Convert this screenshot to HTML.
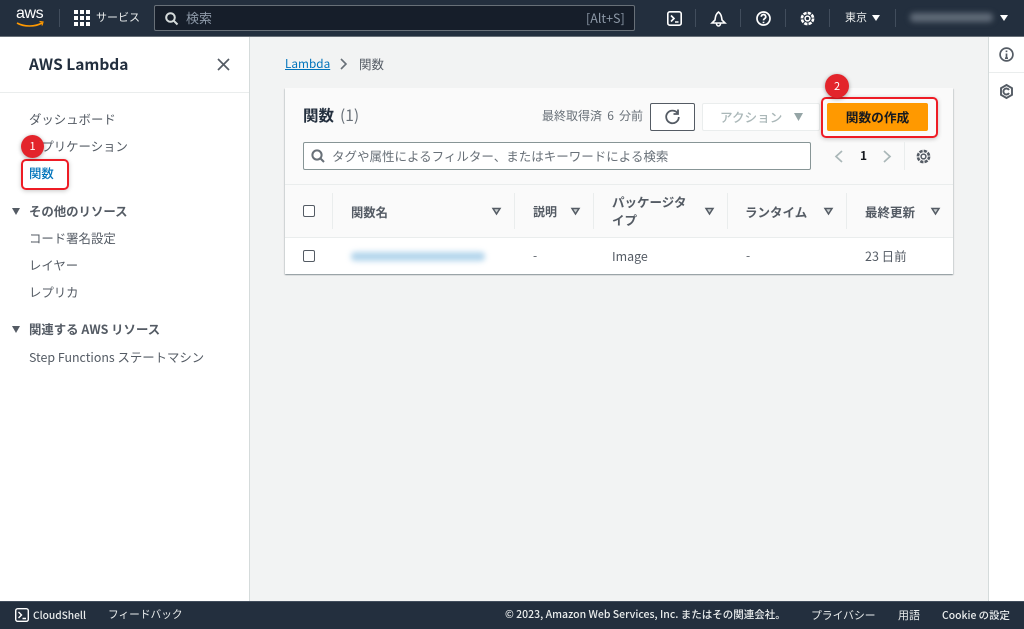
<!DOCTYPE html>
<html lang="ja"><head><meta charset="utf-8"><title>Lambda</title>
<style>
*{box-sizing:border-box}
html,body{margin:0;padding:0}
body{width:1024px;height:629px;position:relative;overflow:hidden;background:#f2f3f3;font-family:"Noto Sans CJK JP","Liberation Sans",sans-serif;font-size:12.400px;color:#545b64}
.a{position:absolute;white-space:nowrap;line-height:18px}
svg{position:absolute;overflow:visible}
.sep{position:absolute;width:1px;background:#eaeded}
.tsep{position:absolute;width:1px;height:18px;top:9px;background:#414d5c}
.b{font-weight:700}
</style></head><body>
<div class="a" style="left:0;top:0;width:1024px;height:37px;background:#232f3e;border-bottom:1px solid #687078"></div>
<svg style="left:16px;top:8px" width="28" height="20" viewBox="0 0 28 20"><path d="M1 15c7 4 18 4 25 0" fill="none" stroke="#f90" stroke-width="1.600"/><path d="M23.500 13.500l3.500.5-1 3.500" fill="none" stroke="#f90" stroke-width="1.200"/></svg>
<div class="a" style="left:16px;top:7px;color:#fff;font:400 16px/14px 'Liberation Sans',sans-serif;letter-spacing:-.4px">aws</div>
<div class="tsep" style="left:59px"></div>
<svg style="left:74px;top:10px" width="16" height="16"><g fill="#fff"><rect width="4" height="4"/><rect x="6" width="4" height="4"/><rect x="12" width="4" height="4"/><rect y="6" width="4" height="4"/><rect x="6" y="6" width="4" height="4"/><rect x="12" y="6" width="4" height="4"/><rect y="12" width="4" height="4"/><rect x="6" y="12" width="4" height="4"/><rect x="12" y="12" width="4" height="4"/></g></svg>
<div class="a" style="left:96px;top:8px;color:#eaeded;font-size:11px">サービス</div>
<div class="a" style="left:154px;top:5px;width:481px;height:26px;background:#161e2a;border:1px solid #687078;border-radius:2px"></div>
<svg style="left:165px;top:12px" width="13" height="13" fill="none" stroke="#d5dbdb" stroke-width="2"><circle cx="5.500" cy="5.500" r="4.300"/><path d="M8.800 8.800L12.500 12.500"/></svg>
<div class="a" style="left:186px;top:9px;color:#8d99a8;font-size:13px">検索</div>
<div class="a" style="left:586px;top:9px;color:#8d99a8;font-size:12.500px">[Alt+S]</div>
<svg style="left:667px;top:11px" width="15" height="15" fill="none" stroke="#fff" stroke-width="1.600"><rect x=".8" y=".8" width="13.400" height="13.400" rx="2"/><path d="M4 4.500l3 3-3 3M8 11h3.500"/></svg>
<div class="tsep" style="left:695px"></div>
<svg style="left:711px;top:11px" width="15" height="16" fill="none" stroke="#fff" stroke-width="1.600"><path d="M7.500 1C5 3 4.500 5 4 9L1 12h13l-3-3C10.500 5 10 3 7.500 1zM5.500 12.500a2 2.500 0 0 0 4 0"/></svg>
<div class="tsep" style="left:740px"></div>
<svg style="left:756px;top:11px" width="15" height="15" fill="none" stroke="#fff" stroke-width="1.700"><circle cx="7.500" cy="7.500" r="6.500"/><path d="M5.300 5.700a2.200 2.200 0 1 1 3.300 1.900c-.8.5-1.100.9-1.100 1.800"/><path d="M7.500 10.700v1.500"/></svg>
<div class="tsep" style="left:785px"></div>
<svg style="left:800px;top:11px" width="15" height="15" fill="none" stroke="#fff"><circle cx="7.500" cy="7.500" r="5.600" stroke-width="2.600" stroke-dasharray="3.300 1.100"/><circle cx="7.500" cy="7.500" r="2.400" stroke-width="1.500"/></svg>
<div class="tsep" style="left:829px"></div>
<div class="a" style="left:845px;top:8px;color:#eaeded;font-size:11px">東京</div>
<svg style="left:872px;top:15px" width="8" height="6"><path d="M0 0h8L4 6z" fill="#fff"/></svg>
<div class="tsep" style="left:895px"></div>
<div class="a" style="left:910px;top:13px;width:83px;height:9px;background:#606b78;border-radius:4px;filter:blur(3px)"></div>
<svg style="left:1000px;top:15px" width="8" height="6"><path d="M0 0h8L4 6z" fill="#fff"/></svg>

<div class="a" style="left:0;top:37px;width:250px;height:564px;background:#fff;border-right:1px solid #d5dbdb"></div>
<div class="a" style="left:0;top:92px;width:249px;height:1px;background:#eaeded"></div>
<div class="a b" style="left:29px;top:54px;color:#232f3e;font-size:15.500px;line-height:20px">AWS Lambda</div>
<svg style="left:217px;top:58px" width="13" height="13" fill="none" stroke="#545b64" stroke-width="1.700"><path d="M1 1l11 11M12 1L1 12"/></svg>
<div class="a" style="left:29px;top:110px">ダッシュボード</div>
<div class="a" style="left:29px;top:137px">アプリケーション</div>
<div class="a" style="left:29px;top:164px;color:#0073bb;font-weight:500">関数</div>
<svg style="left:12px;top:208px" width="8" height="7"><path d="M0 0h8L4 7z" fill="#545b64"/></svg>
<div class="a b" style="left:29px;top:202px">その他のリソース</div>
<div class="a" style="left:29px;top:229px">コード署名設定</div>
<div class="a" style="left:29px;top:256px">レイヤー</div>
<div class="a" style="left:29px;top:283px">レプリカ</div>
<svg style="left:12px;top:326px" width="8" height="7"><path d="M0 0h8L4 7z" fill="#545b64"/></svg>
<div class="a b" style="left:29px;top:320px">関連する AWS リソース</div>
<div class="a" style="left:29px;top:348px">Step Functions ステートマシン</div>
<div class="a" style="left:21px;top:159px;width:48px;height:31px;border:2px solid #ee1c25;border-radius:5px;box-shadow:0 1px 5px rgba(0,0,0,.22)"></div>
<div class="a" style="left:21px;top:135px;width:23px;height:23px;border-radius:50%;background:#e3242b;box-shadow:0 1px 4px rgba(0,0,0,.35);color:#fff;font-size:11px;line-height:23px;text-align:center">1</div>

<div class="a" style="left:285px;top:55px;color:#0073bb;text-decoration:underline;font-size:11.800px">Lambda</div>
<svg style="left:340px;top:58px" width="8" height="12" fill="none" stroke="#687078" stroke-width="1.600"><path d="M1 1l5 5-5 5"/></svg>
<div class="a" style="left:359px;top:55px;font-size:12.500px">関数</div>

<div class="a" style="left:285px;top:88px;width:668px;height:186px;background:#fff;box-shadow:0 1px 1px rgba(0,28,36,.3),1px 1px 1px rgba(0,28,36,.1),-1px 1px 1px rgba(0,28,36,.1)"></div>
<div class="a" style="left:285px;top:88px;width:668px;height:97px;background:#fafafa;border-bottom:1px solid #eaeded"></div>
<div class="a" style="left:285px;top:185px;width:668px;height:53px;background:#fafafa;border-bottom:1px solid #eaeded"></div>
<div class="a b" style="left:303px;top:105px;color:#232f3e;font-size:15.500px;line-height:20px">関数</div>
<div class="a" style="left:340px;top:105px;font-size:15.500px;line-height:20px;color:#687078">(1)</div>
<div class="a" style="left:542px;top:107px;font-size:12px;color:#687078;word-spacing:2.500px">最終取得済 6 分前</div>
<div class="a" style="left:650px;top:103px;width:45px;height:28px;background:#fff;border:1px solid #545b64;border-radius:2px"></div>
<svg style="left:665px;top:109px" width="15" height="15" fill="none" stroke="#545b64" stroke-width="1.800"><path d="M12.800 4.500A6.300 6.300 0 1 0 13.800 8"/><path d="M13 .5v4.500H8.500"/></svg>
<div class="a" style="left:702px;top:103px;width:118px;height:28px;background:#fff;border:1px solid #eaeded;border-radius:2px"></div>
<div class="a" style="left:720px;top:108px;color:#aab7b8;font-weight:500;font-size:12.600px">アクション</div>
<svg style="left:794px;top:113px" width="9" height="8"><path d="M0 0h9L4.500 8z" fill="#95a5a6"/></svg>
<div class="a" style="left:821px;top:97px;width:117px;height:41px;border:2px solid #ee1c25;border-radius:5px;box-shadow:0 1px 5px rgba(0,0,0,.22)"></div>
<div class="a" style="left:827px;top:103px;width:101px;height:28px;background:#f90;border-radius:2px;color:#16191f;font-size:12.700px;font-weight:700;line-height:28px;text-align:center">関数の作成</div>
<div class="a" style="left:825px;top:74px;width:24px;height:24px;border-radius:50%;background:#e3242b;box-shadow:0 1px 4px rgba(0,0,0,.35);color:#fff;font-size:11px;line-height:24px;text-align:center">2</div>

<div class="a" style="left:303px;top:142px;width:508px;height:28px;background:#fff;border:1px solid #879596;border-radius:2px"></div>
<svg style="left:311px;top:149px" width="14" height="14" fill="none" stroke="#687078" stroke-width="2"><circle cx="6" cy="6" r="4.600"/><path d="M9.500 9.500L13 13"/></svg>
<div class="a" style="left:332px;top:147px;font-size:12.500px;color:#687078">タグや属性によるフィルター、またはキーワードによる検索</div>
<svg style="left:834px;top:150px" width="9" height="13" fill="none" stroke="#aab7b8" stroke-width="1.700"><path d="M8 1L2 6.500 8 12"/></svg>
<div class="a b" style="left:860px;top:147px;font-size:12px;color:#16191f">1</div>
<svg style="left:883px;top:150px" width="9" height="13" fill="none" stroke="#aab7b8" stroke-width="1.700"><path d="M1 1l6 5.500L1 12"/></svg>
<div class="sep" style="left:904px;top:142px;height:28px"></div>
<svg style="left:916px;top:149px" width="15" height="15" fill="none" stroke="#545b64"><circle cx="7.500" cy="7.500" r="5.600" stroke-width="2.600" stroke-dasharray="3.300 1.100"/><circle cx="7.500" cy="7.500" r="2.400" stroke-width="1.500"/></svg>

<div class="a" style="left:303px;top:205px;width:12px;height:12px;background:#fff;border:1px solid #545b64;border-radius:2px"></div>
<div class="sep" style="left:332px;top:193px;height:36px"></div>
<div class="a b" style="left:351px;top:203px;font-size:12.300px">関数名</div>
<div class="sep" style="left:514px;top:193px;height:36px"></div>
<div class="a b" style="left:533px;top:203px;font-size:12px">説明</div>
<div class="sep" style="left:593px;top:193px;height:36px"></div>
<div class="a b" style="left:612px;top:193px;font-size:12.500px;line-height:18px;white-space:normal;width:80px">パッケージタイプ</div>
<div class="sep" style="left:727px;top:193px;height:36px"></div>
<div class="a b" style="left:745px;top:203px;font-size:12.500px">ランタイム</div>
<div class="sep" style="left:846px;top:193px;height:36px"></div>
<div class="a b" style="left:865px;top:203px;font-size:12.500px">最終更新</div>
<svg style="left:0;top:0" width="1024" height="629" fill="#c9cfd0" stroke="#545b64" stroke-width="1.500"><path d="M493 208.500h7L496.500 214zM572 208.500h7L575.500 214zM706 208.500h7L709.500 214zM825 208.500h7L828.500 214zM932 208.500h7L935.500 214z"/></svg>

<div class="a" style="left:303px;top:250px;width:12px;height:12px;background:#fff;border:1px solid #545b64;border-radius:2px"></div>
<div class="a" style="left:351px;top:252px;width:134px;height:9px;background:#b3d5ec;filter:blur(3px);border-radius:4px"></div>
<div class="a" style="left:533px;top:247px;font-size:12px">-</div>
<div class="a" style="left:612px;top:247px;font-size:12.400px">Image</div>
<div class="a" style="left:746px;top:247px;font-size:12px">-</div>
<div class="a" style="left:865px;top:247px;font-size:12.500px">23 日前</div>

<div class="a" style="left:988px;top:37px;width:36px;height:564px;background:#fff;border-left:1px solid #d5dbdb"></div>
<div class="a" style="left:989px;top:72px;width:35px;height:1px;background:#eaeded"></div>
<svg style="left:999px;top:47px" width="15" height="15" fill="none" stroke="#545b64" stroke-width="1.700"><circle cx="7.500" cy="7.500" r="6.400"/><path d="M7.500 6.500v5M6 11.200h3M7.500 3.500v1.600"/></svg>
<svg style="left:1000px;top:84px" width="13" height="15" fill="none" stroke="#545b64" stroke-width="1.900"><path d="M6.500 1l5.500 3.200v6.600L6.500 14 1 10.800V4.200z"/><path d="M9 6a3 3 0 1 0 0 3"/></svg>

<div class="a" style="left:0;top:601px;width:1024px;height:28px;background:#232f3e;border-top:1px solid #414d5c"></div>
<svg style="left:15px;top:608px" width="14" height="14" fill="none" stroke="#fff" stroke-width="1.400"><rect x=".7" y=".7" width="12.600" height="12.600" rx="2"/><path d="M3.500 4l3 3-3 3M7.500 10.500h3.500"/></svg>
<div class="a" style="left:33px;top:606px;color:#eaeded;font-size:10.200px;font-weight:500">CloudShell</div>
<div class="a" style="left:108px;top:606px;color:#eaeded;font-size:10.700px">フィードバック</div>
<div class="a" style="left:505px;top:606px;color:#eaeded;font-size:10.500px;font-weight:500">© 2023, Amazon Web Services, Inc. またはその関連会社。</div>
<div class="a" style="left:811px;top:606px;color:#eaeded;font-size:10.800px">プライバシー</div>
<div class="a" style="left:898px;top:606px;color:#eaeded;font-size:11px">用語</div>
<div class="a" style="left:942px;top:606px;color:#eaeded;font-size:10.400px;font-weight:500">Cookie の設定</div>
</body></html>
